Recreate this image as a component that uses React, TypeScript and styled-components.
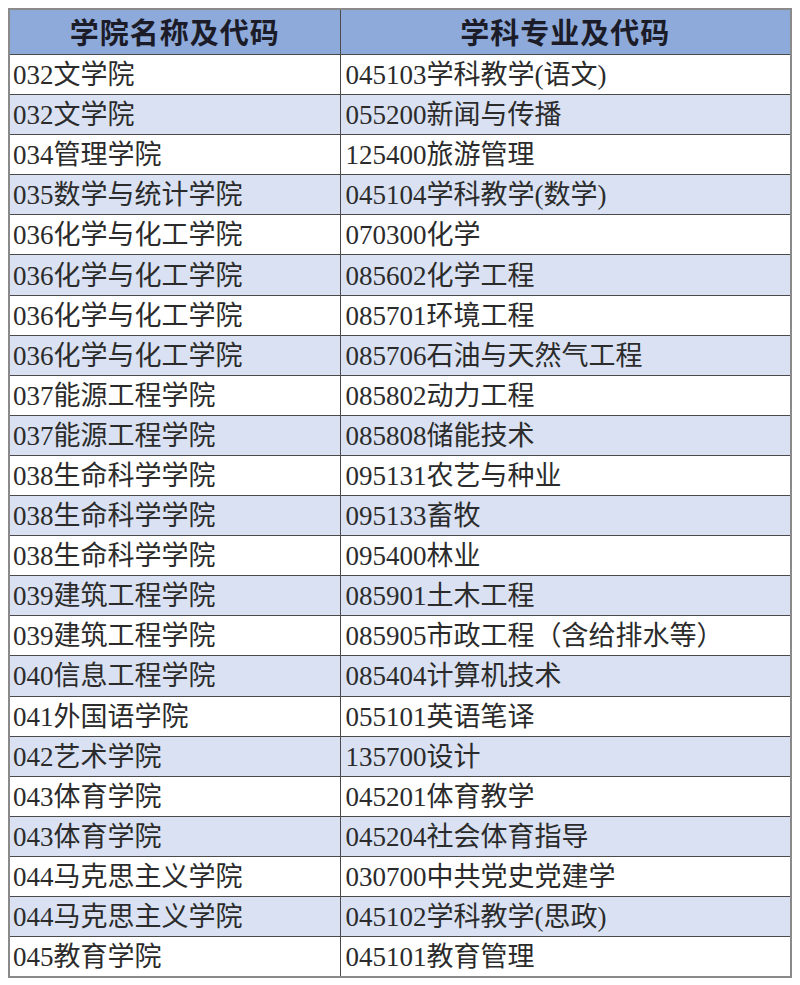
import styled, { createGlobalStyle } from "styled-components";

const GlobalStyle = createGlobalStyle`
  html, body {
    margin: 0;
    padding: 0;
    background: #ffffff;
  }
`;

const rows: [string, string][] = [
  ["032文学院", "045103学科教学(语文)"],
  ["032文学院", "055200新闻与传播"],
  ["034管理学院", "125400旅游管理"],
  ["035数学与统计学院", "045104学科教学(数学)"],
  ["036化学与化工学院", "070300化学"],
  ["036化学与化工学院", "085602化学工程"],
  ["036化学与化工学院", "085701环境工程"],
  ["036化学与化工学院", "085706石油与天然气工程"],
  ["037能源工程学院", "085802动力工程"],
  ["037能源工程学院", "085808储能技术"],
  ["038生命科学学院", "095131农艺与种业"],
  ["038生命科学学院", "095133畜牧"],
  ["038生命科学学院", "095400林业"],
  ["039建筑工程学院", "085901土木工程"],
  ["039建筑工程学院", "085905市政工程（含给排水等）"],
  ["040信息工程学院", "085404计算机技术"],
  ["041外国语学院", "055101英语笔译"],
  ["042艺术学院", "135700设计"],
  ["043体育学院", "045201体育教学"],
  ["043体育学院", "045204社会体育指导"],
  ["044马克思主义学院", "030700中共党史党建学"],
  ["044马克思主义学院", "045102学科教学(思政)"],
  ["045教育学院", "045101教育管理"],
];

export default function App() {
  return (
    <Page>
      <GlobalStyle />
      <Table>
        <colgroup>
          <col style={{ width: 331 }} />
          <col />
        </colgroup>
        <thead>
          <HeadRow>
            <HeadCell>学院名称及代码</HeadCell>
            <HeadCell>学科专业及代码</HeadCell>
          </HeadRow>
        </thead>
        <tbody>
          {rows.map(([college, major], i) => (
            <Row key={i} $shaded={i % 2 === 1}>
              <Cell $first>{college}</Cell>
              <Cell>{major}</Cell>
            </Row>
          ))}
        </tbody>
      </Table>
    </Page>
  );
}

const Page = styled.div`
  padding: 8px;
  width: 784px;
`;

const Table = styled.table`
  width: 784px;
  border-collapse: collapse;
  table-layout: fixed;
  border: 2px solid #8a8a8a;
`;

const HeadRow = styled.tr`
  height: 44px;
  background: #8eaadb;
`;

const HeadCell = styled.th`
  padding: 0 0 2px 0;
  border: 1px solid #4a4a4a;
  font-family: "Noto Sans CJK SC", sans-serif;
  font-weight: 700;
  font-size: 29px;
  letter-spacing: 1px;
  color: #1c1c28;
  text-align: center;
  vertical-align: middle;
`;

const Row = styled.tr<{ $shaded: boolean }>`
  height: 40.1px;
  background: ${(p) => (p.$shaded ? "#d9e1f2" : "#ffffff")};
`;

const Cell = styled.td<{ $first?: boolean }>`
  padding: 2px 0 0 ${(p) => (p.$first ? "3px" : "5px")};
  border: 1px solid #4a4a4a;
  font-family: "Liberation Serif", "Noto Sans CJK SC", serif;
  font-size: 27px;
  line-height: 1;
  color: #2b2b2b;
  white-space: nowrap;
  vertical-align: middle;
`;
